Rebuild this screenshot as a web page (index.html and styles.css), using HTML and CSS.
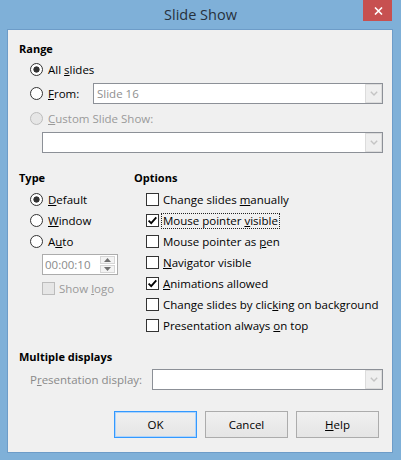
FILE: index.html
```html
<!DOCTYPE html>
<html>
<head>
<meta charset="utf-8">
<title>Slide Show</title>
<link rel="stylesheet" href="styles.css">
</head>
<body>
<div class="window">
  <div class="titlebar">
    <span class="tb-spacer"></span>
    <div class="title">Slide Show</div>
    <div class="close"><svg width="9" height="8" viewBox="0 0 9 8"><path d="M1 0.5 L8 7.5 M8 0.5 L1 7.5" stroke="#fff" stroke-width="1.6" fill="none"/></svg></div>
  </div>
  <div class="client">
    <div class="heading">Range</div>
    <div class="row indent"><span class="radio checked"></span><span>All <u>s</u>lides</span></div>
    <div class="row indent gap3"><span class="radio"></span><span class="from-label"><u>F</u>rom:</span>
      <div class="combo grow"><span class="combo-value">Slide 16</span><span class="drop"><svg width="8" height="5" viewBox="0 0 8 5"><path d="M0.8 0.8 L4 4 L7.2 0.8" stroke="#c4c4c4" stroke-width="1.4" fill="none"/></svg></span></div>
    </div>
    <div class="row indent gap4 disabled"><span class="radio off"></span><span><u>C</u>ustom Slide Show:</span></div>
    <div class="row indent2 gap3">
      <div class="combo grow"><span class="combo-value"></span><span class="drop"><svg width="8" height="5" viewBox="0 0 8 5"><path d="M0.8 0.8 L4 4 L7.2 0.8" stroke="#c4c4c4" stroke-width="1.4" fill="none"/></svg></span></div>
    </div>

    <div class="columns">
      <div class="col-type">
        <div class="heading tall">Type</div>
        <div class="row indent"><span class="radio checked"></span><span><u>D</u>efault</span></div>
        <div class="row indent"><span class="radio"></span><span><u>W</u>indow</span></div>
        <div class="row indent"><span class="radio"></span><span>A<u>u</u>to</span></div>
        <div class="row indent2 gap2">
          <div class="spin"><span class="spin-value">00:00:10</span>
            <span class="spin-btns">
              <span class="spin-btn"><svg width="7" height="4" viewBox="0 0 7 4"><path d="M0 4 L3.5 0 L7 4 Z" fill="#707070"/></svg></span>
              <span class="spin-btn"><svg width="7" height="4" viewBox="0 0 7 4"><path d="M0 0 L3.5 4 L7 0 Z" fill="#707070"/></svg></span>
            </span>
          </div>
        </div>
        <div class="row indent2 gap3 disabled"><span class="check off"></span><span>Show <u>l</u>ogo</span></div>
      </div>
      <div class="col-options">
        <div class="heading tall">Options</div>
        <div class="row indent-o"><span class="check"></span><span>Change slides <u>m</u>anually</span></div>
        <div class="row indent-o"><span class="check"><svg width="11" height="11" viewBox="0 0 11 11"><path d="M1.6 5.6 L4.2 8.2 L9.3 2.4" stroke="#000" stroke-width="1.8" fill="none"/></svg></span><span class="focus">Mouse pointer <u>v</u>isible</span></div>
        <div class="row indent-o"><span class="check"></span><span>Mouse pointer as <u>p</u>en</span></div>
        <div class="row indent-o"><span class="check"></span><span><u>N</u>avigator visible</span></div>
        <div class="row indent-o"><span class="check"><svg width="11" height="11" viewBox="0 0 11 11"><path d="M1.6 5.6 L4.2 8.2 L9.3 2.4" stroke="#000" stroke-width="1.8" fill="none"/></svg></span><span><u>A</u>nimations allowed</span></div>
        <div class="row indent-o"><span class="check"></span><span>Change slides by clic<u>k</u>ing on background</span></div>
        <div class="row indent-o"><span class="check"></span><span>Presentation always <u>o</u>n top</span></div>
      </div>
    </div>

    <div class="heading gap10">Multiple displays</div>
    <div class="row indent gap2">
      <span class="display-label">P<u>r</u>esentation display:</span>
      <div class="combo grow"><span class="combo-value"></span><span class="drop"><svg width="8" height="5" viewBox="0 0 8 5"><path d="M0.8 0.8 L4 4 L7.2 0.8" stroke="#c4c4c4" stroke-width="1.4" fill="none"/></svg></span></div>
    </div>

    <div class="buttons">
      <button class="btn default">OK</button>
      <button class="btn">Cancel</button>
      <button class="btn"><u>H</u>elp</button>
    </div>
  </div>
</div>
</body>
</html>
```

FILE: styles.css
```css
* { box-sizing: border-box; }
html, body { margin: 0; padding: 0; }
body {
  width: 401px;
  height: 460px;
  overflow: hidden;
  background: #7fb0d8;
  font-family: "Open Sans", "Noto Sans", sans-serif;
  font-size: 11.5px;
  color: #000;
}
.window {
  width: 401px;
  height: 460px;
  display: flex;
  flex-direction: column;
}
.titlebar {
  height: 29px;
  display: grid;
  grid-template-columns: 1fr auto 1fr;
}
.title {
  font-size: 14.5px;
  line-height: 29px;
  color: #27313c;
}
.close {
  justify-self: end;
  align-self: start;
  width: 29px;
  height: 21px;
  margin-right: 9px;
  background: #c75050;
  display: flex;
  align-items: center;
  justify-content: center;
  padding-left: 2px;
}
.client {
  flex: 1;
  margin: 0 8px 7px 7px;
  border: 1px solid #6d9cc8;
  background: #f0f0f0;
  padding: 8px 9px 0 11px;
  display: flex;
  flex-direction: column;
}
.heading {
  font-weight: 700;
  font-size: 11px;
  height: 21px;
  line-height: 21px;
}
.heading.tall { height: 22px; line-height: 21px; }
.row {
  display: flex;
  align-items: center;
  height: 21px;
  white-space: nowrap;
}
.indent { padding-left: 11px; }
.indent2 { padding-left: 23px; }
.indent-o { padding-left: 12px; }
.gap2 { margin-top: 2px; }
.gap3 { margin-top: 3px; }
.gap4 { margin-top: 4px; }
.gap10 { margin-top: 10px; }
.disabled { color: #9a9a9a; }

.radio {
  flex: none;
  width: 13px;
  height: 13px;
  border-radius: 50%;
  border: 1px solid #333;
  background: #fff;
  margin-right: 5px;
}
.radio.checked {
  background: radial-gradient(circle, #333 0 2.8px, #fff 3.4px);
}
.radio.off {
  border-color: #bcbcbc;
  background: #e6e6e6;
}
.check {
  flex: none;
  width: 13px;
  height: 13px;
  border: 1px solid #333;
  background: #fff;
  margin-right: 4px;
  display: flex;
  align-items: center;
  justify-content: center;
}
.check.off {
  border-color: #bcbcbc;
  background: #e6e6e6;
}
.focus {
  border: 1px dotted #222;
  padding: 0 1px;
  margin-left: -2px;
  line-height: 14px;
}
.from-label { width: 45px; }
.display-label { width: 122px; color: #8a8a8a; }

.combo {
  height: 21px;
  border: 1px solid #8c9097;
  background: #fff;
  display: flex;
  align-items: stretch;
}
.grow { flex: 1; }
.combo-value {
  flex: 1;
  color: #8f8f8f;
  padding-left: 3px;
  line-height: 19px;
}
.drop {
  width: 17px;
  border: 1px solid #dcdcdc;
  background: #efefef;
  display: flex;
  align-items: center;
  justify-content: center;
}

.col-type { width: 115px; }
.col-options { flex: 1; }
.columns {
  display: flex;
  margin-top: 14px;
}

.spin {
  width: 76px;
  height: 21px;
  border: 1px solid #acacac;
  background: #fff;
  display: flex;
  align-items: center;
}
.spin-value {
  flex: 1;
  color: #8a8a8a;
  padding-left: 2px;
}
.spin-btns {
  display: flex;
  flex-direction: column;
  gap: 1px;
  margin-right: 2px;
}
.spin-btn {
  width: 15px;
  height: 8px;
  border: 1px solid #d6d6d6;
  background: #f3f3f3;
  display: flex;
  align-items: center;
  justify-content: center;
}

.buttons {
  display: flex;
  justify-content: flex-end;
  gap: 8px;
  margin-top: 21px;
  padding-right: 4px;
}
.btn {
  width: 83px;
  height: 27px;
  border: 1px solid #acacac;
  background: linear-gradient(#f0f0f0, #e5e5e5);
  font-family: inherit;
  font-size: 11.5px;
  color: #000;
  padding: 0;
}
.btn.default {
  border-color: #3399ff;
  box-shadow: inset 0 0 0 1px #aed4fb;
}
```
